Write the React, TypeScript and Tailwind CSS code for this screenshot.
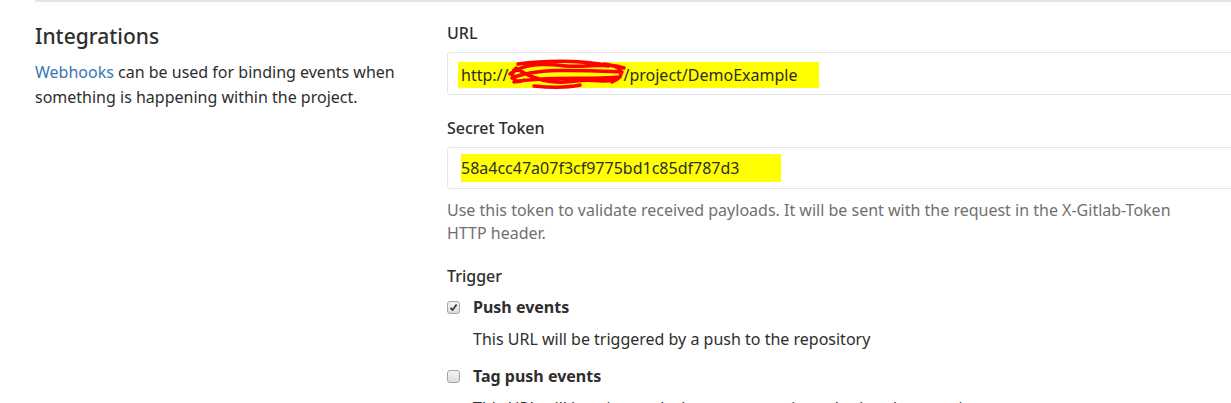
import React from "react";

const font = { fontFamily: '"Noto Sans", "Open Sans", Arial, sans-serif' };

function Scribble() {
  return (
    <svg
      className="absolute left-[-2px] top-[-6px]"
      width="124"
      height="32"
      viewBox="0 0 124 32"
      fill="none"
    >
      <path
        d="M4 16 C 20 4, 40 6, 60 8 S 100 4, 118 10 M6 20 C 30 10, 70 12, 116 14 M8 24 C 40 18, 80 22, 114 19 M10 10 C 30 24, 50 26, 70 23 S 100 26, 110 21 M12 6 C 40 2, 80 2, 102 8 M28 28 C 48 30, 60 30, 74 27 M8 12 C 4 20, 10 26, 18 22 M98 6 C 118 8, 120 18, 106 24"
        stroke="#ff0000"
        strokeWidth="3.5"
        strokeLinecap="round"
      />
    </svg>
  );
}

function Checkbox({ checked }: { checked?: boolean }) {
  return (
    <span className="mt-[6px] flex h-[13px] w-[13px] shrink-0 items-center justify-center rounded-[3px] border border-[#a5a5a5] bg-gradient-to-b from-[#f4f4f4] to-[#dcdcdc]">
      {checked && (
        <svg width="9" height="9" viewBox="0 0 9 9" fill="none">
          <path d="M1.5 4.8 L3.6 7 L7.6 1.6" stroke="#333" strokeWidth="1.7" />
        </svg>
      )}
    </span>
  );
}

export default function App() {
  return (
    <div className="h-[403px] w-[1231px] overflow-hidden bg-white text-[#2e2e2e]" style={font}>
      <div className="ml-[35px] flex border-t-2 border-[#e5e5e5] pt-[19px]">
        <div className="w-[412px] shrink-0 pr-6">
          <h4 className="text-[21px] leading-[30px] font-medium">Integrations</h4>
          <p className="mt-[9px] text-[16px] leading-[25px]">
            <a className="text-[#3777b0]">Webhooks</a> can be used for binding
            events when something is happening within the project.
          </p>
        </div>
        <div className="w-[900px] shrink-0">
          <label className="block text-[16px] leading-[24px] font-medium">URL</label>
          <div className="mt-[7px] flex h-[43px] items-center rounded-[3px] border border-[#e5e5e5] pl-[10px]">
            <span className="mt-[2px] bg-[#ffff00] pl-[3px] pr-[22px] py-[2px] text-[16px] leading-[22px]">
              http://
              <span className="relative inline-block w-[115px]">
                <Scribble />
                &nbsp;
              </span>
              /project/DemoExample
            </span>
          </div>

          <label className="mt-[21px] block text-[16px] leading-[24px] font-medium">
            Secret Token
          </label>
          <div className="mt-[7px] flex h-[42px] items-center rounded-[3px] border border-[#e5e5e5] pl-[13px]">
            <span className="bg-[#ffff00] pr-[42px] py-[3px] text-[16px] leading-[22px]">
              58a4cc47a07f3cf9775bd1c85df787d3
            </span>
          </div>
          <p className="mt-[10px] text-[16px] leading-[23px] text-[#707070]">
            Use this token to validate received payloads. It will be sent with the request in the X-Gitlab-Token
            <br />
            HTTP header.
          </p>

          <label className="mt-[19px] block text-[16px] leading-[24px] font-medium">Trigger</label>
          <div className="mt-[7px] flex flex-col">
            <div className="flex items-start gap-[13px]">
              <Checkbox checked />
              <div>
                <div className="text-[16px] leading-[24px] font-bold">Push events</div>
                <div className="mt-[8px] text-[16px] leading-[24px]">
                  This URL will be triggered by a push to the repository
                </div>
              </div>
            </div>
            <div className="mt-[13px] flex items-start gap-[13px]">
              <Checkbox />
              <div>
                <div className="text-[16px] leading-[24px] font-bold">Tag push events</div>
                <div className="mt-[8px] text-[16px] leading-[24px]">
                  This URL will be triggered when a new tag is pushed to the repository
                </div>
              </div>
            </div>
          </div>
        </div>
      </div>
    </div>
  );
}
